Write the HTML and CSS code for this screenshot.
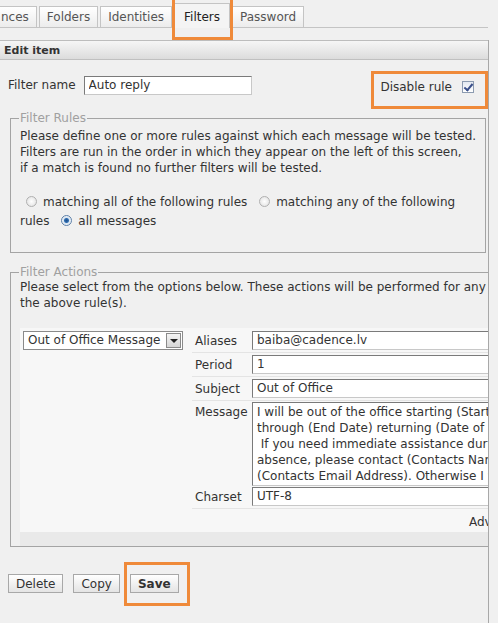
FILE: index.html
```html
<!DOCTYPE html>
<html lang="en">
<head>
    <meta charset="UTF-8">
    <meta name="viewport" content="width=device-width, initial-scale=1.0">
    <title>Filters</title>
    <link rel="stylesheet" href="styles.css">
</head>
<body>
    <div id="page">
        <div class="tabs">
            <span class="tab">nces</span>
            <span class="tab">Folders</span>
            <span class="tab">Identities</span>
            <span class="tab active">Filters</span>
            <span class="tab">Password</span>
        </div>
        <div class="panel">
            <div class="panel-head">Edit item</div>
            <div class="panel-body">
                <div class="name-row">
                    <label for="fname">Filter name</label>
                    <input id="fname" class="text name-input" value="Auto reply">
                    <span class="disable">Disable rule <span class="check"></span></span>
                </div>
                <fieldset class="box rules">
                    <legend>Filter Rules</legend>
                    <p>Please define one or more rules against which each message will be tested.<br>
                    Filters are run in the order in which they appear on the left of this screen,<br>
                    if a match is found no further filters will be tested.</p>
                    <p class="radios">
                        <span class="radio first"></span>matching all of the following rules
                        <span class="radio mid"></span>matching any of the following<br>rules
                        <span class="radio on"></span>all messages
                    </p>
                </fieldset>
                <fieldset class="box actions">
                    <legend>Filter Actions</legend>
                    <p>Please select from the options below. These actions will be performed for any messages matching<br>
                    the above rule(s).</p>
                    <div class="action-table">
                        <div class="action-type">
                            <div class="select">Out of Office Message <span class="arrow"></span></div>
                        </div>
                        <div class="fields">
                            <div class="row"><span class="lbl">Aliases</span><div class="text">baiba@cadence.lv</div></div>
                            <div class="row"><span class="lbl">Period</span><div class="text">1</div></div>
                            <div class="row"><span class="lbl">Subject</span><div class="text">Out of Office</div></div>
                            <div class="row msg"><span class="lbl">Message</span><div class="text area">I will be out of the office starting (Start Date)<br>through (End Date) returning (Date of Return).<br>&nbsp;If you need immediate assistance during my<br>absence, please contact (Contacts Name) at<br>(Contacts Email Address). Otherwise I will respond</div></div>
                            <div class="row charset"><span class="lbl">Charset</span><div class="text">UTF-8</div></div>
                            <div class="row adv"><span class="link">Advanced options</span></div>
                        </div>
                    </div>
                </fieldset>
                <div class="buttons">
                    <button>Delete</button>
                    <button>Copy</button>
                    <button class="main">Save</button>
                </div>
            </div>
        </div>
        <div class="mark mark-tab"></div>
        <div class="mark mark-disable"></div>
        <div class="mark mark-save"></div>
    </div>
</body>
</html>
```
FILE: styles.css
```css
* {
    margin: 0;
    padding: 0;
    box-sizing: border-box;
}
body {
    background-color: #f0f0f0;
    font-family: "DejaVu Sans", Verdana, sans-serif;
    font-size: 12px;
    color: #333333;
    overflow: hidden;
}
#page {
    position: relative;
    width: 498px;
    height: 623px;
    overflow: hidden;
}
.tabs {
    height: 28px;
    padding-top: 6px;
    display: flex;
    gap: 2px;
    margin-left: -7px;
    width: 495px;
    border-bottom: 1px solid #c4c4c4;
}
.tab {
    height: 21px;
    padding: 0 7px;
    line-height: 20px;
    color: #555555;
    border: 1px solid #c4c4c4;
    border-bottom: 0;
    background: linear-gradient(#ffffff, #ececec);
}
.tab.active {
    height: 25px;
    margin-top: -3px;
    padding: 0 9px;
    color: #222222;
    background: #f4f4f4;
    line-height: 26px;
}
.panel {
    margin-top: 12px;
    width: 489px;
    height: 600px;
    border-right: 1px solid #a8a8a8;
    overflow: hidden;
}
.panel-head {
    height: 20px;
    line-height: 19px;
    padding-left: 4px;
    font-size: 11px;
    font-weight: bold;
    color: #333333;
    border-top: 1px solid #bdbdbd;
    border-bottom: 1px solid #c0c0c0;
    background: linear-gradient(#f6f6f6, #dcdcdc);
}
.panel-body {
    width: 560px;
    padding: 15px 0 0 8px;
}
.name-row {
    display: flex;
    align-items: center;
    height: 20px;
    width: 466px;
}
.name-row label {
    margin-right: 8px;
}
.text {
    background: #ffffff;
    border: 1px solid #8a8a8a;
    border-color: #7a7a7a #c8c8c8 #c8c8c8 #7a7a7a;
    font-family: inherit;
    font-size: 12px;
    color: #333333;
    height: 19px;
    padding: 0 4px;
    line-height: 17px;
    white-space: nowrap;
    overflow: hidden;
}
.name-input {
    width: 168px;
}
.disable {
    margin-left: auto;
    margin-top: 4px;
    display: flex;
    align-items: center;
}
.check {
    width: 12px;
    height: 12px;
    margin-left: 10px;
    border: 1px solid #8c9bb0;
    background: linear-gradient(#e4e9f1, #ffffff);
    position: relative;
}
.check::after {
    content: "";
    position: absolute;
    left: 3px;
    top: 0px;
    width: 3px;
    height: 7px;
    border: solid #3a4f8a;
    border-width: 0 2px 2px 0;
    transform: rotate(40deg);
}
.box {
    border: 1px solid #a4a4a4;
    margin-left: 2px;
    padding: 0 9px;
}
.box legend {
    color: #a0a0a0;
    padding: 0 1px;
    margin-left: -1px;
}
.box p {
    line-height: 16px;
    white-space: nowrap;
}
.rules {
    width: 465px;
    margin-top: 16px;
    padding-bottom: 21px;
}
.rules p:first-of-type {
    margin-top: 3px;
}
.rules .radios {
    margin-top: 17px;
    line-height: 19px;
}
.radio {
    display: inline-block;
    width: 11px;
    height: 11px;
    margin: 0 6px;
    border-radius: 50%;
    border: 1px solid #b0b0b0;
    background: radial-gradient(#ffffff, #dedede);
    vertical-align: -1px;
}
.radio.first {
    margin-left: 6px;
}
.radio.mid {
    margin-left: 8px;
}
.radio.on {
    margin-left: 8px;
    border-color: #5c7fa8;
    background: radial-gradient(circle, #1d4f8c 0, #2f6db0 2px, #d8e4f0 3px, #f4f7fa 5px);
}
.actions {
    width: 560px;
    margin-top: 12px;
}
.action-table {
    display: flex;
    margin-top: 17px;
    width: 520px;
    background: #f7f7f7;
    padding: 3px 0 0 3px;
    border-bottom: 14px solid #e9e9e9;
}
.action-type {
    width: 169px;
    flex-shrink: 0;
}
.select {
    position: relative;
    height: 19px;
    width: 160px;
    background: #ffffff;
    border: 1px solid #8a8a8a;
    line-height: 17px;
    padding-left: 4px;
}
.arrow {
    position: absolute;
    right: 1px;
    top: 1px;
    width: 15px;
    height: 15px;
    border: 1px solid #8a8a8a;
    background: linear-gradient(#f4f4f4, #d6d6d6);
}
.arrow::after {
    content: "";
    position: absolute;
    left: 3px;
    top: 5px;
    border: 4px solid transparent;
    border-top: 4px solid #222222;
}
.fields {
    flex: 1;
    min-width: 0;
}
.row {
    display: flex;
    align-items: flex-start;
    padding: 2px 0 2px 0;
    border-bottom: 1px solid #e4e4e4;
}
.row:first-child {
    padding-top: 0;
}
.row.msg {
    padding: 1px 0 0 0;
    border-bottom: 0;
}
.row.charset {
    padding-top: 1px;
}
.lbl {
    width: 60px;
    flex-shrink: 0;
    padding: 2px 0 0 3px;
    line-height: 16px;
}
.row .text {
    width: 280px;
    flex-shrink: 0;
}
.row .area {
    height: 84px;
    line-height: 16px;
    padding-top: 1px;
}
.row.adv {
    height: 23px;
    padding: 3px 0 0 277px;
    align-items: center;
    border-bottom: 0;
    white-space: nowrap;
}
.buttons {
    margin-top: 27px;
    display: flex;
    gap: 10px;
}
button {
    height: 19px;
    padding: 0 7px;
    font-family: inherit;
    font-size: 12px;
    color: #333333;
    border: 1px solid #a8a8a8;
    background: linear-gradient(#ffffff, #e4e4e4);
}
button.main {
    font-weight: bold;
}
.mark {
    position: absolute;
    border: 3px solid #ef8a3a;
}
.mark-tab {
    left: 172px;
    top: -3px;
    width: 61px;
    height: 43px;
}
.mark-disable {
    left: 371px;
    top: 71px;
    width: 117px;
    height: 38px;
}
.mark-save {
    left: 124px;
    top: 562px;
    width: 66px;
    height: 44px;
}
```
